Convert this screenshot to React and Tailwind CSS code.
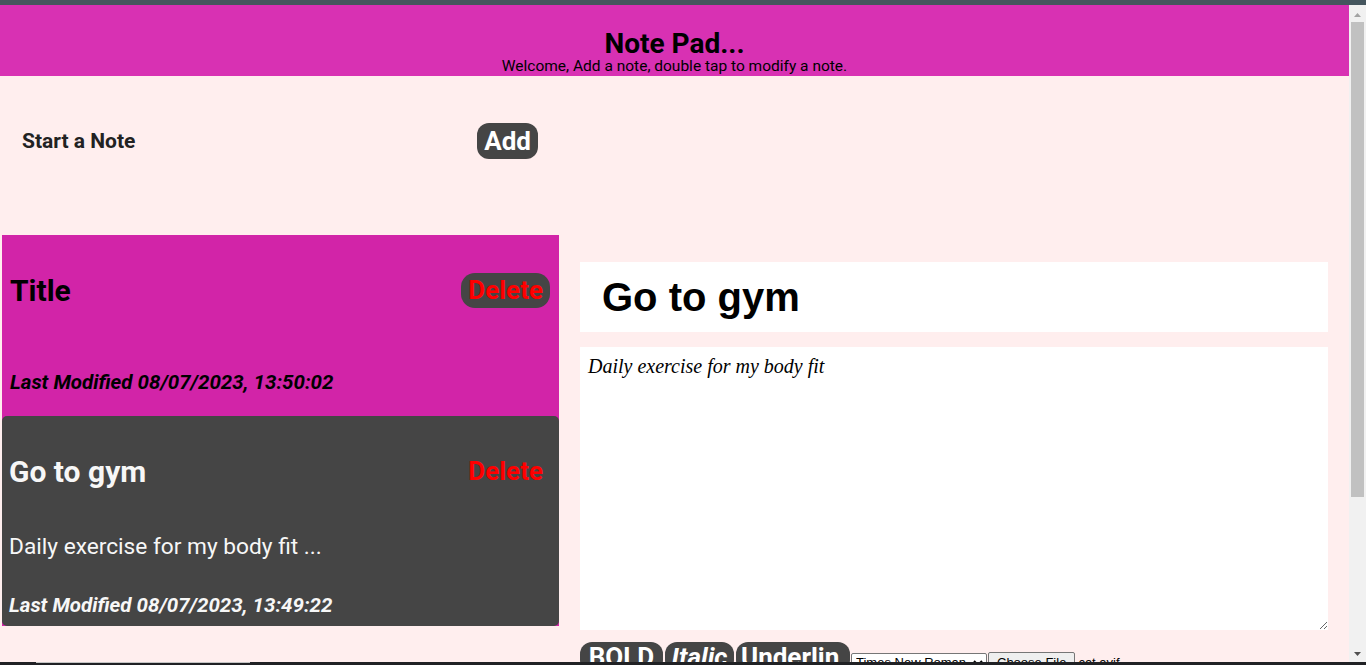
import React from "react";

const roboto = { fontFamily: "Roboto, 'Noto Sans', sans-serif" };

function NoteCard({ title, body, modified, active }) {
  return (
    <div
      className={
        active
          ? "flex flex-col pl-[8px] pr-[9px] pt-[37px] h-[181px]"
          : "flex flex-col pl-[7px] pr-[9px] pt-[37px] h-[210px] bg-[#454545] rounded-[5px] text-[#f7f7f7]"
      }
    >
      <div className="flex items-center justify-between h-[36px]">
        <span className="text-[30px] font-bold leading-normal">{title}</span>
        <button
          className={
            active
              ? "h-[35px] px-[7px] rounded-[14px] bg-[#454545] text-[#ff0000] text-[26px] font-bold leading-none"
              : "h-[35px] px-[7px] text-[#ff0000] text-[26px] font-bold leading-none"
          }
        >
          Delete
        </button>
      </div>
      {body ? (
        <p className="mt-[45px] text-[22.7px] leading-[26px]">{body}</p>
      ) : null}
      <p
        className={
          active
            ? "mt-[62px] text-[20.5px] leading-[24px] font-bold italic"
            : "mt-[33px] text-[20.5px] leading-[24px] font-bold italic"
        }
      >
        {modified}
      </p>
    </div>
  );
}

export default function App() {
  return (
    <div className="w-[1366px] h-[665px] overflow-hidden flex flex-col bg-[#ffeeee]" style={roboto}>
      {/* browser chrome strip */}
      <div className="h-[5px] bg-[#45565e] shrink-0" />

      <div className="flex flex-1 min-h-0">
        <main className="flex-1 overflow-hidden flex flex-col">
          <header className="bg-[#d831b3] pt-[25px] pb-[2px] text-center text-black">
            <h1 className="text-[28px] leading-[28px] font-bold">Note Pad...</h1>
            <p className="text-[15.5px] leading-[16px]">
              Welcome, Add a note, double tap to modify a note.
            </p>
          </header>

          <div className="ml-[2px] w-[557px] mt-[47px] h-[36px] flex items-center justify-between pl-[20px] pr-[21px]">
            <span className="text-[21px] font-bold text-[#222] pt-[2px]">Start a Note</span>
            <button className="h-[36px] px-[7px] rounded-[12px] bg-[#454545] text-white text-[26px] font-bold leading-none">
              Add
            </button>
          </div>

          <div className="flex items-start mt-[76px]">
            {/* notes list */}
            <div className="ml-[2px] w-[557px] bg-[#d224a8] text-black">
              <NoteCard title="Title" modified="Last Modified 08/07/2023, 13:50:02" active />
              <NoteCard
                title="Go to gym"
                body="Daily exercise for my body fit ..."
                modified="Last Modified 08/07/2023, 13:49:22"
              />
            </div>

            {/* editor */}
            <div className="ml-[21px] w-[748px] pt-[27px] flex flex-col">
              <input
                className="h-[70px] bg-white pl-[22px] text-[40px] font-bold text-black outline-none border-0"
                style={{ fontFamily: "'Liberation Sans', Arial, sans-serif" }}
                defaultValue="Go to gym"
              />
              <textarea
                className="mt-[15px] h-[283px] bg-white px-[8px] py-[4px] text-[20px] italic text-black outline-none border-0"
                style={{ fontFamily: "'Liberation Serif', 'Times New Roman', serif" }}
                defaultValue="Daily exercise for my body fit"
              />
              <div className="mt-[12px] flex items-start gap-[2px]">
                <button className="w-[83px] h-[30px] rounded-[12px] bg-[#454545] text-white text-[26px] font-bold leading-[27px] whitespace-nowrap overflow-hidden">
                  BOLD
                </button>
                <button className="w-[69px] h-[30px] rounded-[12px] bg-[#454545] text-white text-[26px] font-bold italic leading-[27px] whitespace-nowrap overflow-hidden">
                  Italic
                </button>
                <button className="w-[114px] h-[30px] rounded-[12px] bg-[#454545] text-white text-[26px] font-bold leading-[27px] whitespace-nowrap overflow-hidden text-left pl-[5px]">
                  Underlin
                </button>
                <div
                  className="mt-[10px] -ml-[1px] flex items-center text-[13px] text-black"
                  style={{ fontFamily: "'Liberation Sans', Arial, sans-serif" }}
                >
                  <select className="w-[136px] h-[20px] bg-white border border-[#767676] rounded-[2px] text-[13px]">
                    <option>Times New Roman</option>
                    <option>Arial</option>
                    <option>Roboto</option>
                  </select>
                  <button className="ml-[1px] h-[21px] px-[8px] bg-[#efefef] border border-[#767676] rounded-[2px] text-[13px]">
                    Choose File
                  </button>
                  <span className="ml-[3px]">cat.avif</span>
                </div>
              </div>
            </div>
          </div>
        </main>

        {/* scrollbar */}
        <div className="w-[17px] bg-[#f1f1f1] flex flex-col items-center shrink-0">
          <svg width="9" height="17" viewBox="0 0 9 17" className="shrink-0">
            <path d="M1 12 L4.5 8 L8 12 Z" fill="#a3a3a3" />
          </svg>
          <div className="w-[13px] h-[475px] bg-[#c1c1c1]" />
          <div className="flex-1" />
          <svg width="9" height="14" viewBox="0 0 9 14" className="shrink-0">
            <path d="M1 4 L8 4 L4.5 8 Z" fill="#505050" />
          </svg>
        </div>
      </div>

      {/* bottom chrome strip */}
      <div className="h-[3px] bg-[#202124] shrink-0 flex">
        <div className="ml-[36px] w-[214px] h-[1px] bg-[#c4c4c4]" />
      </div>
    </div>
  );
}
